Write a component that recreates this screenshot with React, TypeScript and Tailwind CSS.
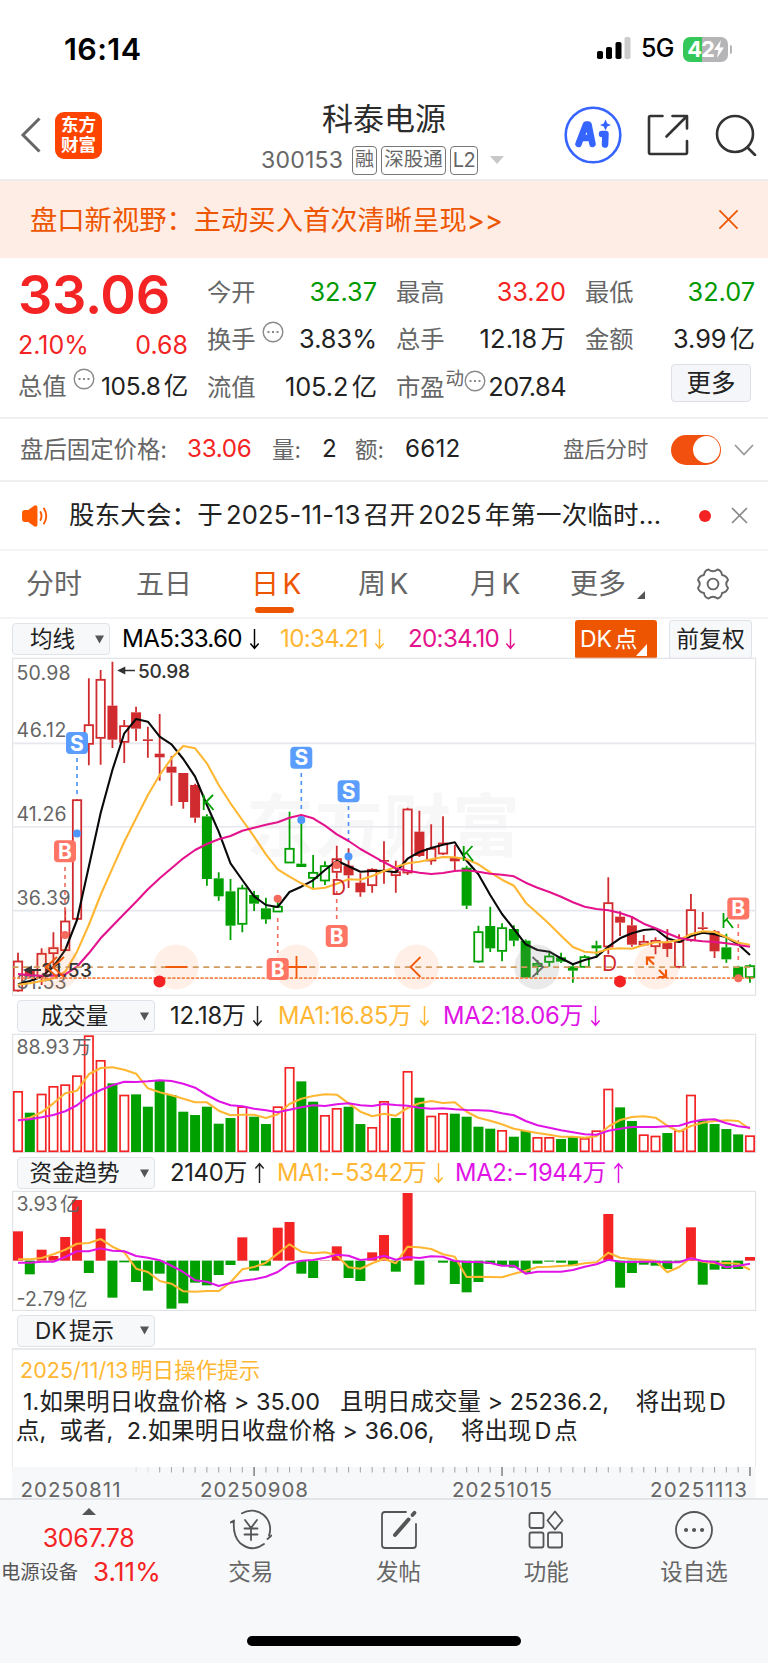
import React from "react";

const STEP = 11.806;
const cx = (i: number) => 18 + STEP * i;

/* Candles: kind (R hollow red, F solid red, g hollow green, G solid green), high, body top, body bottom, low, in thirds of a pixel */
const candles: [string, number, number, number, number][] = [
  ["R", 893, 918, 1008, 1010], ["F", 940, 947, 965, 970], ["R", 880, 895, 965, 990], ["R", 832, 878, 896, 930],
  ["R", 760, 798, 887, 887], ["R", 432, 434, 793, 793], ["R", 70, 209, 268, 331], ["R", 45, 73, 250, 329],
  ["F", 20, 152, 254, 279], ["R", 195, 212, 262, 324], ["F", 155, 172, 221, 258], ["F", 215, 253, 258, 308],
  ["F", 177, 296, 307, 377], ["F", 303, 335, 353, 452], ["F", 354, 354, 441, 461], ["F", 386, 390, 488, 503],
  ["G", 478, 484, 672, 692], ["G", 652, 670, 724, 737], ["G", 672, 709, 812, 855], ["g", 689, 699, 808, 832],
  ["G", 708, 720, 746, 768], ["G", 728, 760, 793, 806], ["g", 720, 754, 771, 771], ["g", 470, 580, 624, 624],
  ["G", 480, 626, 636, 636], ["g", 600, 652, 670, 703], ["g", 619, 632, 678, 690], ["R", 572, 611, 652, 671],
  ["F", 580, 632, 661, 699], ["F", 655, 683, 712, 725], ["R", 640, 643, 692, 713], ["F", 559, 615, 620, 686],
  ["R", 617, 650, 662, 713], ["R", 458, 462, 654, 660], ["F", 467, 530, 603, 606], ["R", 508, 580, 618, 629],
  ["R", 484, 564, 597, 600], ["F", 570, 607, 619, 646], ["G", 632, 638, 752, 762], ["g", 812, 830, 921, 923],
  ["G", 755, 813, 880, 891], ["g", 805, 818, 889, 919], ["G", 811, 822, 857, 874], ["G", 853, 857, 968, 968],
  ["g", 915, 925, 935, 960], ["g", 893, 903, 922, 935], ["G", 893, 907, 920, 924], ["G", 925, 934, 947, 983],
  ["g", 900, 905, 937, 938], ["G", 857, 871, 880, 909], ["R", 667, 743, 876, 898], ["F", 769, 785, 803, 843],
  ["F", 784, 811, 869, 875], ["R", 840, 859, 870, 874], ["R", 847, 856, 875, 898], ["F", 822, 864, 882, 906],
  ["R", 838, 859, 937, 940], ["R", 717, 764, 856, 860], ["F", 771, 817, 822, 825], ["F", 825, 829, 889, 909],
  ["G", 836, 877, 913, 923], ["G", 932, 935, 968, 975], ["g", 928, 932, 968, 983],
];
const ma5 = [988, 978, 965, 935, 885, 795, 635, 475, 345, 235, 192, 200, 245, 268, 312, 365, 450, 530, 625, 675, 724, 750, 756, 711, 695, 676, 645, 617, 634, 650, 648, 647, 652, 611, 591, 579, 569, 562, 617, 658, 720, 777, 822, 868, 885, 890, 910, 928, 915, 905, 875, 850, 835, 825, 822, 850, 861, 843, 833, 838, 847, 868, 900];
const ma10 = [989, 985, 978, 970, 950, 890, 810, 720, 640, 560, 490, 420, 360, 310, 273, 280, 325, 390, 445, 495, 545, 598, 643, 665, 685, 702, 698, 686, 673, 674, 663, 648, 636, 625, 620, 613, 606, 607, 613, 628, 652, 674, 692, 743, 775, 807, 842, 876, 890, 893, 882, 880, 881, 870, 862, 862, 855, 838, 829, 831, 847, 863, 869];
const ma20 = [957, 961, 962, 962, 958, 935, 895, 850, 813, 776, 740, 703, 670, 640, 610, 585, 567, 553, 543, 527, 518, 509, 502, 488, 480, 490, 512, 538, 558, 582, 602, 622, 640, 647, 653, 657, 654, 648, 646, 650, 656, 659, 664, 683, 698, 711, 725, 742, 755, 762, 766, 774, 786, 806, 820, 835, 849, 855, 859, 861, 865, 870, 875];

const volTops = [289, 354, 297, 274, 269, 242, 122, 196, 266, 300, 299, 336, 258, 301, 351, 361, 336, 387, 370, 335, 366, 388, 335, 217, 260, 321, 361, 340, 336, 388, 397, 319, 370, 229, 309, 363, 355, 357, 366, 396, 402, 406, 426, 409, 427, 427, 433, 426, 430, 407, 282, 338, 379, 419, 423, 415, 407, 300, 377, 388, 403, 419, 422];
const volKinds = "RGRRRRRRGRGGGGGGGGGRGGRRGGRRGGRRGRGRRGGGGRGGRRGGRRRGGRRGRRGGGGR";
const volMa1 = [376, 368, 352, 325, 295, 287, 238, 219, 217, 224, 236, 280, 292, 301, 311, 322, 322, 347, 361, 359, 359, 369, 358, 327, 311, 303, 298, 299, 325, 350, 364, 356, 362, 339, 325, 318, 324, 322, 350, 368, 377, 388, 401, 408, 414, 419, 425, 425, 428, 424, 395, 375, 366, 364, 368, 392, 410, 393, 383, 378, 376, 378, 402];
const volMa2 = [376, 373, 367, 360, 349, 331, 303, 285, 271, 260, 261, 259, 256, 258, 266, 278, 300, 319, 331, 334, 341, 346, 352, 344, 337, 331, 333, 328, 325, 331, 333, 327, 330, 332, 338, 341, 340, 343, 345, 346, 347, 355, 361, 378, 391, 398, 406, 412, 418, 419, 407, 401, 396, 396, 396, 394, 392, 381, 374, 373, 385, 394, 398];

const fund = [229, 358, 284, 303, 246, 135, 354, 221, 428, 322, 381, 407, 356, 461, 445, 383, 391, 360, 330, 247, 347, 332, 218, 201, 356, 369, 316, 274, 369, 378, 292, 240, 350, 114, 389, 317, 323, 387, 412, 381, 327, 333, 338, 353, 326, 320, 323, 332, 317, 317, 177, 398, 354, 329, 332, 342, 322, 217, 389, 344, 342, 342, 306];
const fundMa1 = [313, 313, 309, 298, 284, 266, 264, 252, 275, 292, 341, 351, 378, 386, 409, 410, 408, 408, 382, 343, 336, 323, 296, 268, 290, 295, 292, 301, 337, 341, 325, 311, 325, 275, 277, 282, 298, 305, 366, 365, 366, 367, 356, 347, 336, 335, 333, 331, 325, 322, 293, 308, 312, 314, 317, 352, 336, 309, 320, 325, 324, 326, 344];
const fundMa2 = [323, 323, 320, 320, 306, 289, 289, 280, 287, 289, 303, 308, 316, 332, 351, 376, 380, 393, 384, 377, 373, 365, 351, 326, 317, 315, 308, 299, 302, 315, 311, 302, 314, 306, 309, 304, 305, 318, 321, 321, 324, 332, 332, 356, 350, 350, 350, 345, 335, 328, 314, 320, 321, 320, 320, 322, 322, 310, 318, 321, 337, 332, 326];

const RED = "#d02b2e";
const GREEN = "#00a000";

function Line({ data, color }: { data: number[]; color: string }) {
  return (
    <polyline fill="none" stroke={color} strokeWidth="2.1" strokeLinejoin="round"
      points={data.map((v, i) => `${cx(i).toFixed(1)},${(v / 3).toFixed(1)}`).join(" ")} />
  );
}

function Marker({ x, y, t }: { x: number; y: number; t: "B" | "S" }) {
  return (
    <g>
      <rect x={x - 11} y={y - 11} width="22" height="22" rx="4" fill={t === "S" ? "#5a9dff" : "#ff7565"} />
      <text x={x} y={y + 7.6} textAnchor="middle" fontSize="21" fontWeight="700" fill="#fff">{t}</text>
    </g>
  );
}

function MainChart() {
  const disc = (x: number) => <circle cx={x} cy="312" r="22.5" fill="#ff7a30" fillOpacity="0.12" />;
  return (
    <svg width="768" height="342" viewBox="0 0 768 342" className="block shrink-0">
      <text x="246" y="196" fontSize="68" fontWeight="700" fill="#f7f7f8" textLength="274">东方财富</text>
      <g stroke="#e6e8ee" strokeWidth="1.6">
        <path d="M12.5 88.4H755.5M12.5 171.8H755.5M12.5 255.6H755.5" />
        <rect x="12.6" y="3.3" width="743" height="337" fill="none" stroke="#e2e3e6" strokeWidth="1.2" />
      </g>
      {candles.map(([k, h, t, b, l], i) => {
        const c = k === "R" || k === "F" ? RED : GREEN;
        const x = cx(i);
        const solid = k === "F" || k === "G";
        return (
          <g key={i} stroke={c} strokeWidth="1.8">
            <path d={`M${x} ${h / 3}V${t / 3}M${x} ${b / 3}V${l / 3}`} />
            {solid
              ? <rect x={x - 5} y={t / 3} width="10" height={Math.max(1.6, (b - t) / 3)} fill={c} stroke="none" />
              : <rect x={x - 4.2} y={t / 3 + 0.5} width="8.4" height={Math.max(2, (b - t) / 3 - 1)} fill="#fff" />}
          </g>
        );
      })}
      <g fontSize="19.5" fill="#666">
        <text x="16.5" y="24.5" textLength="54">50.98</text>
        <text x="16.5" y="81.8" textLength="50">46.12</text>
        <text x="16.5" y="165.5" textLength="50">41.26</text>
        <text x="16.5" y="250" textLength="54">36.39</text>
        <text x="16.5" y="333.5" textLength="50">31.53</text>
      </g>
      <g fill="none" strokeWidth="1.6" strokeDasharray="4 4">
        <g stroke="#4a90f5">
          <path d="M77 103V140M301.3 118V156M348.5 151V188" />
        </g>
        <g stroke="#f56a5c">
          <path d="M65 212V262M277.7 263V298M336.7 236V266M738.3 269V308" />
        </g>
      </g>
      <Line data={ma5} color="#0a0a0a" />
      <Line data={ma10} color="#ffb733" />
      <Line data={ma20} color="#e4128c" />
      <g fill="#4f97ff"><circle cx="77" cy="178.5" r="4" /><circle cx="301.3" cy="165" r="4" /><circle cx="348.5" cy="201.5" r="4" /></g>
      <g fill="#f56a5c"><circle cx="65" cy="280" r="4" /><circle cx="277.7" cy="243.7" r="4" /><circle cx="336.7" cy="210" r="4" /><circle cx="738.3" cy="323.3" r="4" /></g>
      {disc(57)}{disc(176)}{disc(296.5)}{disc(416.5)}{disc(656.5)}
      <circle cx="536.8" cy="312" r="22.5" fill="#8a8a8a" fillOpacity="0.18" />
      <path d="M12.5 312.2H755" stroke="#d19a5e" strokeWidth="1.8" strokeDasharray="6 4.6" />
      <path d="M12.5 323.2H755" stroke="#f58246" strokeWidth="1.7" strokeDasharray="3.2 1.5" />
      <text x="41" y="321.5" fontSize="19" fontWeight="500" fill="#333" textLength="51">31.53</text>
      <path d="M25 315H41M25 315l6-3v6z" stroke="#333" strokeWidth="1.8" fill="#333" />
      <g fill="none" stroke="#f05a0a" strokeWidth="1.8">
        <path d="M57 302L46 312L57 322M64 302L53 312L64 322" />
        <path d="M165.5 312H187M286 312H307M296.5 301V323M420.5 302L410.5 312L420.5 322" />
        <path d="M647 302.5L654 309.5M647 310V302.5H654.5M659 315L666 322M666 314.5V322H658.5" strokeWidth="2.2" />
      </g>
      <path d="M532.5 302L543 312L532.5 322" fill="none" stroke="#666" strokeWidth="1.8" />
      <circle cx="159.5" cy="326.5" r="6" fill="#f42222" /><circle cx="620" cy="326.5" r="6" fill="#f42222" />
      <text x="138" y="22.5" fontSize="19" fontWeight="500" fill="#333" textLength="52">50.98</text>
      <path d="M120 15.5H135M119 15.5l5.5-2.8v5.6z" stroke="#333" strokeWidth="1.6" fill="#333" />
      <g fill="none" stroke={GREEN} strokeWidth="1.8">
        <path d="M203.7 140V155M213 140L204 149M206.5 146.5L213.5 155M463.7 191V206M472.5 191L464 200M466.5 197.5L473 206M723.5 258V273M732.5 258L724 267M726.5 264.5L733 273" />
      </g>
      <g fontSize="21" fill={RED}>
        <text x="331" y="240">D</text>
        <text x="602" y="316">D</text>
      </g>
      <Marker x={77} y={88} t="S" /><Marker x={65} y={196.3} t="B" />
      <Marker x={301.3} y={102.7} t="S" /><Marker x={348.6} y={136.3} t="S" />
      <Marker x={277.7} y={314} t="B" /><Marker x={336.7} y={281} t="B" />
      <Marker x={738.3} y={253.5} t="B" />
    </svg>
  );
}

function VolumeChart() {
  return (
    <svg width="768" height="122" viewBox="0 38 768 122" className="block shrink-0">
      <rect x="12.6" y="39.4" width="743" height="118" fill="none" stroke="#e2e3e6" strokeWidth="1.2" />
      {volTops.map((t, i) => volKinds[i] === "R"
        ? <rect key={i} x={cx(i) - 4.2} y={t / 3 + 0.5} width="8.4" height={156.3 - t / 3 - 0.5} fill="#fff" stroke="#f42424" strokeWidth="1.7" />
        : <rect key={i} x={cx(i) - 5} y={t / 3 - 0.3} width="10" height={157.3 - t / 3} fill={GREEN} />)}
      <Line data={volMa1} color="#ffb733" />
      <Line data={volMa2} color="#e014e6" />
      <text x="16.5" y="54" dy="5" fontSize="19.5" fill="#666" textLength="75">88.93万</text>
    </svg>
  );
}

function FundChart() {
  return (
    <svg width="768" height="122" viewBox="0 35 768 122" className="block shrink-0">
      <rect x="12.6" y="36.4" width="743" height="119" fill="none" stroke="#e2e3e6" strokeWidth="1.2" />
      <path d="M12.6 105.6H755" stroke="#eceef0" strokeWidth="1" />
      {fund.map((t, i) => (
        <rect key={i} x={cx(i) - 5} y={Math.min(t, 317) / 3} width="10" height={Math.abs(317 - t) / 3} fill={t < 317 ? "#f42424" : GREEN} />
      ))}
      <Line data={fundMa1} color="#ffb733" />
      <Line data={fundMa2} color="#e014e6" />
      <g fontSize="19.5" fill="#666">
        <text x="16.5" y="56" textLength="63">3.93亿</text>
        <text x="16.5" y="150.5" textLength="71">-2.79亿</text>
      </g>
    </svg>
  );
}

function Arrow({ up }: { up?: boolean }) {
  return (
    <svg width="11" height="24" viewBox="0 0 12 24" fill="none" stroke="currentColor" strokeWidth="1.6" className="shrink-0">
      <path d={up ? "M6 23V2M1.5 7L6 1.800L10.5 7" : "M6 1V22M1.5 17L6 22.2L10.5 17"} />
    </svg>
  );
}

function Picker({ label, wide }: { label: string; wide?: boolean }) {
  return (
    <div className={`flex h-8 shrink-0 items-center justify-between rounded border border-[#dfe2e8] bg-[#f7f8fa] pr-[5px] tracking-normal text-[#222] ${wide ? "w-[138px]" : "w-[98px]"}`}>
      <span className={`flex-1 text-center text-[22.5px] leading-[30px] ${wide ? "pr-[9px]" : "pr-[3px]"}`}>{label}</span>
      <svg width="9" height="9" viewBox="0 0 9 9"><path d="M0 .5H9L4.5 8.5z" fill="#555" /></svg>
    </div>
  );
}

function Dots() {
  return (
    <svg width="22" height="22" viewBox="0 0 22 22" fill="none" stroke="#8a8a8a" strokeWidth="1.4" className="shrink-0">
      <circle cx="11" cy="11" r="9.8" />
      <path d="M5.5 11h2M10 11h2M14.5 11h2" strokeWidth="2" />
    </svg>
  );
}

function Stat({ label, value, tone = "text-[#222]", children }: { label: string; value: string; tone?: string; children?: React.ReactNode }) {
  return (
    <div className="flex h-[47.5px] items-center justify-between whitespace-nowrap">
      <span className="-ml-[1px] flex text-[24.3px] text-[#666]">{label}{children}</span>
      <span className={`text-[25.3px] ${tone}`}>{value}</span>
    </div>
  );
}

function NavItem({ label, children }: { label: string; children: React.ReactNode }) {
  return (
    <div className="flex w-[147.75px] flex-col items-center pt-[9px]">
      <svg width="42" height="42" viewBox="0 0 42 42" fill="none" stroke="#555" strokeWidth="1.8" strokeLinecap="round" strokeLinejoin="round">{children}</svg>
      <span className="mt-[7px] text-[22.5px] leading-[28px] text-[#666]">{label}</span>
    </div>
  );
}

const ticks = Array.from({ length: 53 }, (_, k) => k + 10);

export default function App() {
  return (
    <div className="flex h-[1663px] w-[768px] flex-col overflow-hidden bg-white font-[Inter,'Noto_Sans_CJK_SC',sans-serif] text-[#222] [text-autospace:normal]">
      {/* status bar */}
      <div className="flex h-[98px] shrink-0 items-center pl-[64px] pr-[36px]">
        <span className="flex-1 text-[30.5px] font-semibold tracking-[0.4px] text-black">16:14</span>
        <svg width="34" height="24" viewBox="0 0 34 24">
          <rect x="0" y="14" width="6" height="8" rx="1.8" /><rect x="9" y="10" width="6" height="12" rx="1.8" />
          <rect x="18.5" y="5" width="6" height="17" rx="1.8" /><rect x="27.5" y="0" width="6" height="22" rx="1.8" fill="#ccc" />
        </svg>
        <span className="ml-[10px] w-[42px] text-[25px] font-medium tracking-[-0.8px] text-black">5G</span>
        <div className="flex h-[25px] w-[45px] items-center justify-center overflow-hidden rounded-[7px] bg-linear-to-r from-[#34c759] from-42% to-[#b5b5b8] to-42% text-white">
          <span className="text-[22px] font-bold tracking-[-1px]">42</span>
          <svg width="10" height="18" viewBox="0 0 10 18"><path d="M7 0L0 10H4.5L3 18L10 7.5H5.5z" fill="#fff" /></svg>
        </div>
        <div className="ml-[1.5px] h-[9px] w-[2.5px] rounded-r-full bg-[#b5b5b8]" />
      </div>

      {/* header */}
      <div className="grid h-[83px] shrink-0 grid-cols-[1fr_250px_1fr] border-b-2 border-[#ececef]">
        <div className="flex items-center pb-[7px] pl-[20px]">
          <svg width="21" height="36" viewBox="0 0 21 36" fill="none" stroke="#666" strokeWidth="3"><path d="M19.5 1.5L3 18L19.5 34.5" /></svg>
          <div className="ml-[14px] flex h-[47px] w-[47px] flex-col items-center justify-center rounded-[9px] bg-[#ff4400] text-[17.5px] font-bold leading-[20px] text-white">
            <span>东方</span><span>财富</span>
          </div>
        </div>
        <div className="flex flex-col items-center">
          <span className="mt-[3px] text-[31px] leading-[36px] text-[#2b2b2b]">科泰电源</span>
          <div className="mt-[8px] flex h-[30px] items-center self-start pl-[2px] text-[#666]">
            <span className="w-[91px] text-[23px] tracking-[0.25px]">300153</span>
            <span className="flex h-[29px] w-[25px] items-center justify-center rounded border-[1.5px] border-[#777] text-[19px]">融</span>
            <span className="ml-1 flex h-[29px] w-[65px] items-center justify-center whitespace-nowrap rounded border-[1.5px] border-[#777] text-[19.5px]">深股通</span>
            <span className="ml-1 flex h-[29px] w-[28px] items-center justify-center rounded border-[1.5px] border-[#777] text-[20px] tracking-[-0.5px]">L2</span>
            <svg width="14" height="8" viewBox="0 0 14 8" className="ml-[12px]"><path d="M0 0H14L7 8z" fill="#c8c8c8" /></svg>
          </div>
        </div>
        <div className="flex items-center justify-end pb-[7px] pr-[11px]">
          <svg width="58" height="58" viewBox="0 0 58 58">
            <circle cx="29" cy="29" r="27.3" fill="none" stroke="#3564ff" strokeWidth="2.6" />
            <g fill="none" stroke="#3564ff" strokeLinecap="round" strokeLinejoin="round">
              <path d="M14.500 38L22 18.500H24.5L28.500 38M18.500 32H27" strokeWidth="6.500" />
              <path d="M38 28H41.500L41 38.500" strokeWidth="6.500" />
            </g>
            <path d="M41.500 13.500L43.300 17.500L47 19L43.300 20.500L41.500 24.500L39.700 20.500L36 19L39.700 17.500z" fill="#3564ff" />
          </svg>
          <svg width="42" height="42" viewBox="0 0 42 42" className="ml-[25px]" fill="none" stroke="#333" strokeWidth="2.6" strokeLinecap="round" strokeLinejoin="round">
            <path d="M15.5 2H3.5Q2 2 2 3.5V38.5Q2 40 3.5 40H38.5Q40 40 40 38.5V27M25.500 2H40V14.500M39 3L19.500 22.500" />
          </svg>
          <svg width="42" height="42" viewBox="0 0 42 42" className="ml-[26px]" fill="none" stroke="#333" strokeWidth="2.6" strokeLinecap="round">
            <circle cx="20" cy="20" r="18" /><path d="M32.5 33.5L40 41" />
          </svg>
        </div>
      </div>

      {/* promo banner */}
      <div className="flex h-[77px] shrink-0 items-center justify-between bg-[#feede5] pl-[30px] pr-[29px] text-[27.3px] text-[#ee5500]">
        <span className="pt-[3px]">盘口新视野：主动买入首次清晰呈现&gt;&gt;</span>
        <svg width="21" height="21" viewBox="0 0 22 22" stroke="#ee5500" strokeWidth="1.8"><path d="M1.5 1.5L20.5 20.5M20.5 1.5L1.5 20.5" /></svg>
      </div>

      {/* quote summary */}
      <div className="grid h-[161px] shrink-0 grid-cols-[169px_169px_169px_169px] gap-x-[20px] border-b-2 border-[#f0f0f3] pl-[19px]">
        <div className="flex flex-col pt-[7px] text-[#f42424]">
          <span className="-ml-[1px] h-[60px] text-[54px] font-semibold leading-[60px] tracking-[-0.3px]">33.06</span>
          <div className="-ml-[1px] flex h-[41px] items-center justify-between text-[25px]"><span>2.10%</span><span>0.68</span></div>
          <div className="-ml-[1px] flex h-[41px] items-center justify-between whitespace-nowrap text-[#222]">
            <span className="flex text-[24.3px] text-[#666]">总值<span className="ml-[6px]"><Dots /></span></span>
            <span className="text-[24.5px] tracking-[-0.3px]">105.8亿</span>
          </div>
        </div>
        <div className="pt-[10px]">
          <Stat label="今开" value="32.37" tone="text-[#009900]" />
          <Stat label="换手" value="3.83%"><span className="ml-[6px]"><Dots /></span></Stat>
          <Stat label="流值" value="105.2亿" />
        </div>
        <div className="pt-[10px]">
          <Stat label="最高" value="33.20" tone="text-[#f42424]" />
          <Stat label="总手" value="12.18万" tone="tracking-[0.2px] text-[#222]" />
          <Stat label="市盈" value="207.84" tone="tracking-[-0.5px] text-[#222]">
            <span className="-mt-[1px] ml-[1px] flex"><span className="text-[18.500px] leading-[20px]">动</span><span className="pt-[2px]"><Dots /></span></span>
          </Stat>
        </div>
        <div className="pt-[10px]">
          <Stat label="最低" value="32.07" tone="text-[#009900]" />
          <Stat label="金额" value="3.99亿" />
          <div className="ml-[85px] mt-[1px] flex h-[38px] w-[80px] items-center justify-center rounded border border-[#dcdfe6] bg-[#f5f6fa] text-[24.5px]"><span className="pt-[1px]">更多</span></div>
        </div>
      </div>

      {/* after-hours fixed price */}
      <div className="flex h-[63px] shrink-0 items-center whitespace-nowrap border-b-2 border-[#f0f0f3] pl-[20px] text-[24.2px]">
        <span className="w-[167px] text-[23.4px] text-[#666]">盘后固定价格:</span>
        <span className="w-[85px] tracking-[-0.3px] text-[#f42424]">33.06</span>
        <span className="w-[50px] text-[22.5px] text-[#666]">量:</span>
        <span className="w-[33px]">2</span>
        <span className="w-[50px] text-[22.5px] text-[#666]">额:</span>
        <span className="w-[158px] tracking-[0.2px]">6612</span>
        <span className="w-[108px] text-[21.3px] text-[#666]">盘后分时</span>
        <span className="flex h-[30px] w-[50px] items-center justify-end rounded-full bg-[#f2500f] px-[1.5px]"><span className="h-[27px] w-[27px] rounded-full bg-white" /></span>
        <svg width="20" height="12" viewBox="0 0 20 12" fill="none" stroke="#999" strokeWidth="1.8" className="ml-[13px]"><path d="M1 1L10 10.5L19 1" /></svg>
      </div>

      {/* announcement */}
      <div className="flex h-[69px] shrink-0 items-center whitespace-nowrap border-b-2 border-[#f5f5f7] pl-[22px]">
        <svg width="27" height="22" viewBox="0 0 27 22" fill="none" stroke="#ff5a00" strokeWidth="1.9" strokeLinecap="round">
          <path d="M3 6H6.5L12.5 1.5Q14.5 .5 14.5 2.5V19.5Q14.5 21.500 12.5 20.5L6.5 16H3Q1 16 1 14V8Q1 6 3 6z" fill="#ff5a00" />
          <path d="M18.5 7Q20.5 11 18.5 15M22 3.500Q26.500 11 22 18.500" />
        </svg>
        <span className="ml-[20px] w-[609px] text-[25.5px] tracking-[0.15px] text-[#222]">股东大会：于2025-11-13召开2025年第一次临时...</span>
        <span className="ml-[21px] h-[12px] w-[12px] rounded-full bg-[#f42222]" />
        <svg width="17" height="17" viewBox="0 0 17 17" stroke="#888" strokeWidth="1.7" className="ml-[20px]"><path d="M1 1L16 16M16 1L1 16" /></svg>
      </div>

      {/* period tabs */}
      <div className="flex h-[68px] shrink-0 items-center whitespace-nowrap border-b-2 border-[#f3f3f6] pl-[26px] text-[28px] text-[#666]">
        <span className="w-[110px]">分时</span>
        <span className="w-[115px]">五日</span>
        <span className="flex w-[107px] flex-col pt-[10px] text-[#ee5500]">
          <span className="leading-[38px]">日K</span>
          <span className="ml-[4px] mt-[4px] h-[6px] w-[39px] rounded-full bg-[#ee5500]" />
        </span>
        <span className="w-[112px]">周K</span>
        <span className="w-[100px]">月K</span>
        <span className="w-[67px]">更多</span>
        <svg width="8" height="8" viewBox="0 0 8 8" className="mt-[22px]"><path d="M8 0V8H0z" fill="#555" /></svg>
        <svg width="34" height="34" viewBox="0 0 34 34" fill="none" stroke="#666" strokeWidth="1.9" strokeLinejoin="round" className="ml-[51px]">
          <path d="M12.5 2.500Q17 6 21.500 2.500Q25.500 3.500 26 8Q31 9 32 13Q28.500 17 32 21Q31 25 26 26Q25.500 30.500 21.500 31.500Q17 28 12.500 31.500Q8.500 30.500 8 26Q3 25 2 21Q5.500 17 2 13Q3 9 8 8Q8.500 3.500 12.500 2.500z" />
          <circle cx="17" cy="17" r="5.4" />
        </svg>
      </div>

      {/* moving averages */}
      <div className="flex h-[38px] shrink-0 items-center whitespace-nowrap pl-[12px] pt-[2px] text-[24.2px] tracking-[-0.7px]">
        <Picker label="均线" />
        <span className="ml-[12px] flex w-[158px] items-center gap-[7px] text-black">MA5:33.60<Arrow /></span>
        <span className="flex w-[128px] items-center gap-[6px] text-[#ffb733]">10:34.21<Arrow /></span>
        <span className="flex w-[167px] items-center gap-[6px] text-[#e4128c]">20:34.10<Arrow /></span>
        <span className="flex h-[39px] w-[82px] rounded-[3px] bg-[#ee5500] text-white">
          <span className="pl-[5px] text-[23px] leading-[39px] tracking-[-0.2px]">DK点</span>
          <svg width="11" height="12" viewBox="0 0 11 12" className="-ml-[1px] mt-[24px] shrink-0"><path d="M11 0V12H0z" fill="#fff" /></svg>
        </span>
        <span className="ml-[12px] flex h-[39px] w-[83px] items-center justify-center rounded-[3px] border border-[#dfe2e8] bg-[#f7f8fa] text-[22.8px] tracking-normal text-[#222]">前复权</span>
      </div>

      <div className="-mt-[2px] flex shrink-0 flex-col"><MainChart /></div>

      <div className="flex h-[36px] shrink-0 items-center whitespace-nowrap pl-[17px] pt-[2px] text-[23.8px] tracking-[-0.3px] [text-autospace:no-autospace]">
        <Picker label="成交量" wide />
        <span className="ml-[15px] flex w-[108px] items-center gap-[7px] text-[#222]">12.18万<Arrow /></span>
        <span className="flex w-[165px] items-center gap-[7px] text-[#ffb733]">MA1:16.85万<Arrow /></span>
        <span className="flex items-center gap-[7px] text-[#e014e6]">MA2:18.06万<Arrow /></span>
      </div>
      <VolumeChart />

      <div className="flex h-[35px] shrink-0 items-center whitespace-nowrap pl-[17px] pt-[1px] text-[23.8px] tracking-[-0.3px] [text-autospace:no-autospace]">
        <Picker label="资金趋势" wide />
        <span className="ml-[15px] flex w-[107px] items-center gap-[7px] text-[#222]">2140万<Arrow up /></span>
        <span className="flex w-[178px] items-center gap-[7px] text-[#ffb733]">MA1:−5342万<Arrow /></span>
        <span className="flex items-center gap-[7px] text-[#e014e6]">MA2:−1944万<Arrow up /></span>
      </div>
      <FundChart />

      <div className="flex h-[36px] shrink-0 items-center pl-[17px] pt-[1px]"><Picker label="DK提示" wide /></div>

      {/* tip panel */}
      <div className="mx-[12px] h-[119px] shrink-0 whitespace-nowrap border-x border-t-2 border-[#e8e9ec] pl-[3px] pt-[4px]">
        <div className="pl-[4px] text-[21.5px] leading-[33px] tracking-[0.05px] text-[#ffb733]">2025/11/13明日操作提示</div>
        <div className="whitespace-pre pl-[7px] text-[23.4px] leading-[29px] tracking-[0.08px]">1.如果明日收盘价格 &gt; 35.00   且明日成交量 &gt; 25236.2,    将出现D</div>
        <div className="whitespace-pre text-[23.4px] leading-[29px] tracking-[0.08px]">点,  或者,  2.如果明日收盘价格 &gt; 36.06,    将出现D点</div>
      </div>

      {/* date axis */}
      <svg width="768" height="31" viewBox="0 0 768 31" className="block shrink-0 overflow-visible">
        <rect x="12" y="0" width="743.5" height="31" fill="#f7f8fa" />
        {ticks.map((i) => {
          const big = i === 20 || i === 41 || i === 62;
          return <path key={i} d={`M${cx(i)} 0V${big ? 9 : 5.5}`} stroke={big ? "#888" : i < 12 ? "#e0e0e0" : "#aaa"} strokeWidth={big ? 1.6 : 1.1} />;
        })}
        <g fontSize="20.5" fill="#666">
          <text x="20.5" y="30.3" textLength="100">20250811</text>
          <text x="200" y="30.3" textLength="108">20250908</text>
          <text x="452" y="30.3" textLength="100">20251015</text>
          <text x="650" y="30.3" textLength="97">20251113</text>
        </g>
      </svg>

      {/* bottom bar */}
      <div className="flex flex-1 flex-col border-t-2 border-[#e3e4e7] bg-[#f7f8fa]">
        <div className="flex flex-1">
          <div className="flex w-[177px] flex-col items-center whitespace-nowrap pt-[8px] text-[#f42424]">
            <svg width="14" height="7" viewBox="0 0 14 7"><path d="M0 7H14L7 0z" fill="#555" /></svg>
            <span className="mt-[8px] text-[25px] leading-[30px] tracking-[-0.3px]">3067.78</span>
            <div className="mt-[3px] flex w-full items-center pl-[1px] leading-[32px]">
              <span className="w-[92px] text-[19.3px] text-[#555]">电源设备</span>
              <span className="text-[26px] tracking-[0.1px]">3.11%</span>
            </div>
          </div>
          <NavItem label="交易">
            <path d="M12 4.300A18.500 18.500 0 0 1 39 26.500M37.500 30L41.500 26.500M34 35Q22 44 10 34Q2.500 26 4 11.500L0.500 13.500" />
            <path d="M15 11L21 19L27 11M21 19V31M14.5 19.5H27.5M14.5 25.5H27.5" />
          </NavItem>
          <NavItem label="发帖">
            <path d="M28 3H7Q4 3 4 6V36Q4 39 7 39H35Q38 39 38 36V15" />
            <path d="M30.500 10.500L17 26" strokeWidth="4" /><path d="M34.500 6L36.500 3.800" strokeWidth="3.800" />
          </NavItem>
          <NavItem label="功能">
            <rect x="4.500" y="4" width="14" height="15" rx="2" /><rect x="4.5" y="23.500" width="14" height="15" rx="2" />
            <rect x="23" y="23.500" width="14" height="15" rx="2" /><path d="M30 2.500L37.500 11.500L30 20.500L22.500 11.500z" />
          </NavItem>
          <NavItem label="设自选">
            <circle cx="21" cy="21" r="18" />
            <path d="M13 21h.1M21 21h.1M29 21h.1" strokeWidth="4" />
          </NavItem>
        </div>
        <div className="mx-auto mb-[17px] h-[10px] w-[274px] rounded-full bg-black" />
      </div>
    </div>
  );
}
